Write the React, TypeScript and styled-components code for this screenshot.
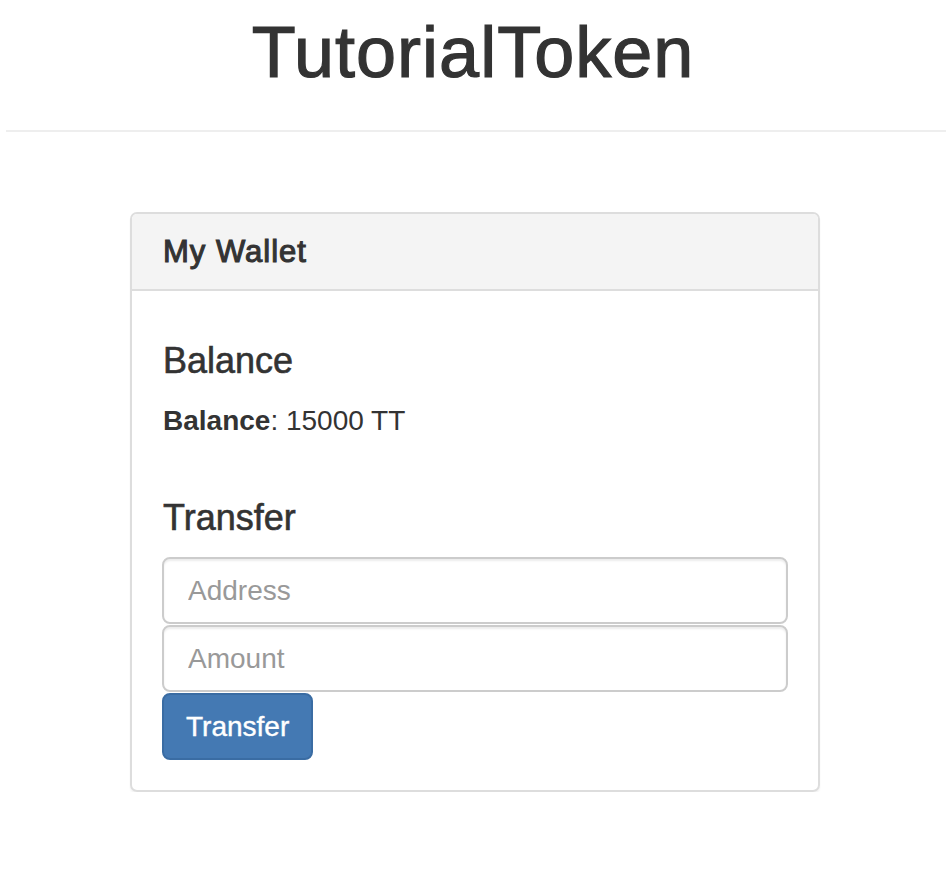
import { useState } from 'react';
import styled, { createGlobalStyle } from 'styled-components';

const GlobalStyle = createGlobalStyle`
  body {
    margin: 0;
    background: #ffffff;
    color: #333333;
    font-family: 'Liberation Sans', Arial, Helvetica, sans-serif;
  }
  * { box-sizing: border-box; }
`;

const PageHeader = styled.header`
  margin: 13px 0 80px 6px;
  padding-bottom: 18px;
  border-bottom: 2px solid #eeeeee;
`;

const Title = styled.h1`
  margin: 0 0 20px -6px;
  font-size: 72px;
  font-weight: 400;
  line-height: 1.1;
  letter-spacing: 1px;
  text-align: center;
  -webkit-text-stroke: 1.2px #333333;
`;

const Panel = styled.section`
  width: 690px;
  margin-left: 130px;
  border: 2px solid #dddddd;
  border-radius: 7px;
  box-shadow: 0 2px 2px rgba(0, 0, 0, 0.05);
  overflow: hidden;
`;

const PanelHeading = styled.div`
  padding: 20px 30px;
  background: #f4f4f4;
  border-bottom: 2px solid #dddddd;
`;

const PanelTitle = styled.h3`
  margin: 0 0 0 1px;
  font-size: 31px;
  font-weight: 400;
  line-height: 35px;
  letter-spacing: 1px;
  -webkit-text-stroke: 1.1px #333333;
`;

const PanelBody = styled.div`
  padding: 30px;
`;

const SubHeading = styled.h4<{ $top?: number }>`
  margin: ${(p) => p.$top ?? 20}px 0 20px 1px;
  font-size: 36px;
  font-weight: 400;
  line-height: 1.1;
  -webkit-text-stroke: 0.6px #333333;
`;

const Text = styled.p`
  margin: 0 0 0 1px;
  font-size: 28px;
  line-height: 40px;
`;

const Field = styled.input`
  display: block;
  width: 100%;
  height: 67px;
  margin-bottom: 1px;
  padding: 12px 24px;
  font-family: inherit;
  font-size: 28px;
  color: #555555;
  background: #ffffff;
  border: 2px solid #cccccc;
  border-radius: 8px;
  box-shadow: inset 0 2px 2px rgba(0, 0, 0, 0.075);
  outline: none;

  &::placeholder {
    color: #999999;
  }
`;

const Button = styled.button`
  height: 67px;
  padding: 12px 22px;
  font-family: inherit;
  font-size: 28px;
  color: #ffffff;
  background: #4479b3;
  border: 2px solid #3a6ca3;
  border-radius: 8px;
  cursor: pointer;
  -webkit-text-stroke: 0.4px #ffffff;
`;

export default function App() {
  const [address, setAddress] = useState('');
  const [amount, setAmount] = useState('');

  const handleSubmit = (event: any) => {
    event.preventDefault();
  };

  return (
    <>
      <GlobalStyle />
      <PageHeader>
        <Title>TutorialToken</Title>
      </PageHeader>
      <Panel>
        <PanelHeading>
          <PanelTitle>My Wallet</PanelTitle>
        </PanelHeading>
        <PanelBody>
          <SubHeading>Balance</SubHeading>
          <Text>
            <strong>Balance</strong>: 15000 TT
          </Text>
          <SubHeading $top={57}>Transfer</SubHeading>
          <form onSubmit={handleSubmit}>
            <Field
              type="text"
              placeholder="Address"
              value={address}
              onChange={(e) => setAddress(e.target.value)}
            />
            <Field
              type="text"
              placeholder="Amount"
              value={amount}
              onChange={(e) => setAmount(e.target.value)}
            />
            <Button type="submit">Transfer</Button>
          </form>
        </PanelBody>
      </Panel>
    </>
  );
}
